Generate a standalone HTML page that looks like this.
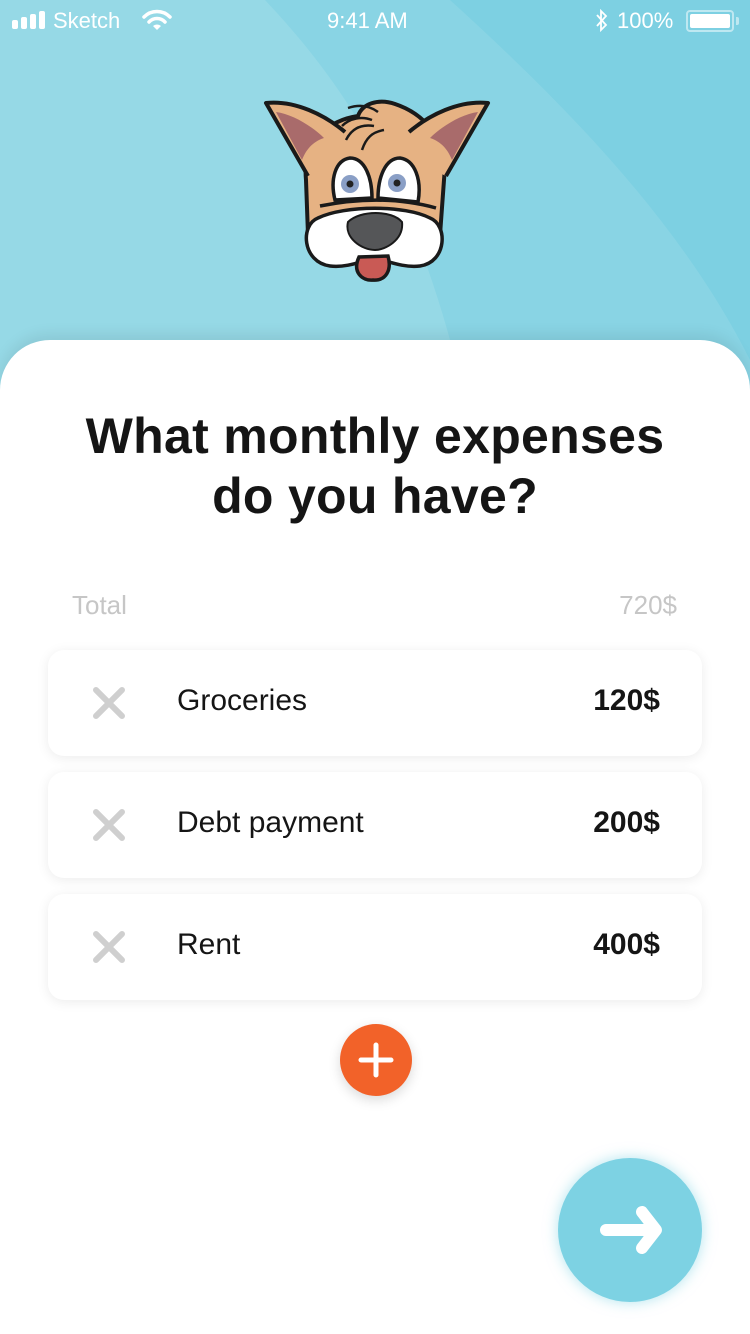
<!DOCTYPE html>
<html><head><meta charset="utf-8"><style>
*{margin:0;padding:0;box-sizing:border-box}
body{width:750px;height:1334px;overflow:hidden;background:#fff;font-family:"Liberation Sans",sans-serif;position:relative}
.top{position:absolute;left:0;top:0;width:750px;height:400px}
.panel{position:absolute;left:0;top:340px;width:750px;height:994px;background:#fff;border-radius:50px 50px 0 0;box-shadow:0 -6px 14px rgba(0,0,0,0.08)}
.sb{position:absolute;top:0;left:0;width:750px;height:40px;color:#fff;font-size:22px}
h1{position:absolute;top:406px;left:0;width:750px;text-align:center;font-size:50px;line-height:60px;font-weight:bold;color:#151515;letter-spacing:0.3px}
.tot{position:absolute;top:590px;font-size:26px;color:#c6c6c6}
.card{position:absolute;left:48px;width:654px;height:106px;background:#fff;border-radius:16px;box-shadow:0 2px 12px rgba(0,0,0,0.08)}
.card .x{position:absolute;left:44px;top:36px}
.card .n{position:absolute;left:129px;top:34px;font-size:30px;color:#151515}
.card .v{position:absolute;right:42px;top:34px;font-size:30px;font-weight:bold;color:#151515}
</style></head><body>
<svg class="top" viewBox="0 0 750 400">
<rect width="750" height="400" fill="#7dd0e2"/>
<path d="M0,0 L450,0 C560,100 680,220 750,360 L750,400 L0,400 Z" fill="#89d4e4"/>
<path d="M0,0 L265,0 C350,90 420,200 465,400 L0,400 Z" fill="#96d9e6"/>
</svg>
<div class="sb">
<svg style="position:absolute;left:12px;top:11px" width="36" height="18"><rect x="0" y="9" width="6" height="9" rx="2" fill="#fff"/><rect x="9" y="6" width="6" height="12" rx="2" fill="#fff"/><rect x="18" y="3" width="6" height="15" rx="2" fill="#fff"/><rect x="27" y="0" width="6" height="18" rx="2" fill="#fff"/></svg>
<span style="position:absolute;left:53px;top:8px">Sketch</span>
<svg style="position:absolute;left:142px;top:9px" width="30" height="22" viewBox="0 0 30 22"><path d="M2,8 A18,18 0 0 1 28,8" stroke="#fff" stroke-width="3.5" fill="none" stroke-linecap="round"/><path d="M7,13 A11,11 0 0 1 23,13" stroke="#fff" stroke-width="3.5" fill="none" stroke-linecap="round"/><path d="M11,17 L15,21 L19,17 A6,6 0 0 0 11,17Z" fill="#fff"/></svg>
<span style="position:absolute;left:327px;top:8px;font-size:22px">9:41 AM</span>
<svg style="position:absolute;left:595px;top:9px" width="14" height="24" viewBox="0 0 14 24"><path d="M2,6 L11,16 L6,21 L6,2 L11,7 L2,17" stroke="#fff" stroke-width="1.8" fill="none"/></svg>
<span style="position:absolute;left:617px;top:8px">100%</span>
<div style="position:absolute;left:686px;top:10px;width:48px;height:22px;border:2px solid rgba(255,255,255,0.5);border-radius:4px;padding:2px"><div style="width:100%;height:100%;background:#fff;border-radius:2px"></div></div>
<div style="position:absolute;left:736px;top:17px;width:3px;height:8px;background:rgba(255,255,255,0.5);border-radius:0 2px 2px 0"></div>
</div>
<svg style="position:absolute;left:0;top:0" width="750" height="300" viewBox="0 0 750 300">
<g stroke="#1a1a1a" stroke-width="4" stroke-linejoin="round">
<path d="M306,180 C302,140 330,120 358,116 C362,104 378,98 395,104 C425,114 448,140 444,180 L440,235 C430,262 320,262 308,235 Z" fill="#e6b283"/>
</g>
<path d="M308,176 L266,103 C295,100 325,115 345,132 L332,165 Z" fill="#e6b283"/>
<path d="M446,176 L488,103 C459,100 429,115 409,132 L422,165 Z" fill="#e6b283"/>
<path d="M308,176 L266,103 C295,100 325,115 345,132 M446,176 L488,103 C459,100 429,115 409,132" stroke="#1a1a1a" stroke-width="4" fill="none" stroke-linejoin="round"/>
<path d="M302,160 L276,112 C292,114 312,126 324,138 C312,142 306,150 302,160Z" fill="#a96b6b"/>
<path d="M452,160 L478,112 C462,114 442,126 430,138 C442,142 448,150 452,160Z" fill="#a96b6b"/>
<path d="M348,108 C360,104 370,106 378,112 M342,126 C350,118 362,116 372,120 M346,140 C352,128 362,124 374,126 M362,150 C366,138 372,132 384,130" stroke="#1a1a1a" stroke-width="2.5" fill="none"/>
<g stroke="#1a1a1a" stroke-width="3.5">
<path d="M335,200 C330,180 335,160 350,158 C365,158 372,178 372,198 Z" fill="#fff"/>
<path d="M378,198 C378,178 385,158 400,158 C415,160 422,180 418,202 Z" fill="#fff"/>
<path d="M320,206 C360,198 400,198 436,208" fill="none"/>
<path d="M318,218 C300,225 302,262 330,266 C345,268 360,262 375,258 C390,262 405,268 420,266 C447,262 448,225 430,218 C405,205 345,205 318,218 Z" fill="#fff"/>
<path d="M359,257 C352,272 362,281 373,280 C386,281 392,270 388,256 Z" fill="#c95a55"/>
</g>
<circle cx="350" cy="184" r="9" fill="#8a9fc6"/><circle cx="350" cy="184" r="3.5" fill="#222"/>
<circle cx="397" cy="183" r="9" fill="#8a9fc6"/><circle cx="397" cy="183" r="3.5" fill="#222"/>
<path d="M348,222 C360,210 392,210 402,222 C404,240 385,250 375,250 C362,250 344,238 348,222 Z" fill="#555658" stroke="#1a1a1a" stroke-width="2"/>
</svg>
<div class="panel"></div>
<h1>What monthly expenses<br>do you have?</h1>
<div class="tot" style="left:72px">Total</div>
<div class="tot" style="right:73px">720$</div>
<div class="card" style="top:650px"><svg class="x" width="34" height="34"><path d="M4,4 L30,30 M30,4 L4,30" stroke="#cfcfcf" stroke-width="6" stroke-linecap="round"/></svg><div class="n">Groceries</div><div class="v">120$</div></div>
<div class="card" style="top:772px"><svg class="x" width="34" height="34"><path d="M4,4 L30,30 M30,4 L4,30" stroke="#cfcfcf" stroke-width="6" stroke-linecap="round"/></svg><div class="n">Debt payment</div><div class="v">200$</div></div>
<div class="card" style="top:894px"><svg class="x" width="34" height="34"><path d="M4,4 L30,30 M30,4 L4,30" stroke="#cfcfcf" stroke-width="6" stroke-linecap="round"/></svg><div class="n">Rent</div><div class="v">400$</div></div>
<div style="position:absolute;left:340px;top:1024px;width:72px;height:72px;border-radius:50%;background:#f26229;box-shadow:0 4px 12px rgba(0,0,0,0.15)"><svg width="72" height="72"><path d="M36,21 L36,51 M21,36 L51,36" stroke="#fff" stroke-width="5" stroke-linecap="round"/></svg></div>
<div style="position:absolute;left:558px;top:1158px;width:144px;height:144px;border-radius:50%;background:#7dd2e3;box-shadow:0 0 14px rgba(125,210,227,0.6)"><svg width="144" height="144"><path d="M48,72 L96,72 M84,54 L98,72 L84,90" stroke="#fff" stroke-width="12" stroke-linecap="round" stroke-linejoin="round" fill="none"/></svg></div>
</body></html>
